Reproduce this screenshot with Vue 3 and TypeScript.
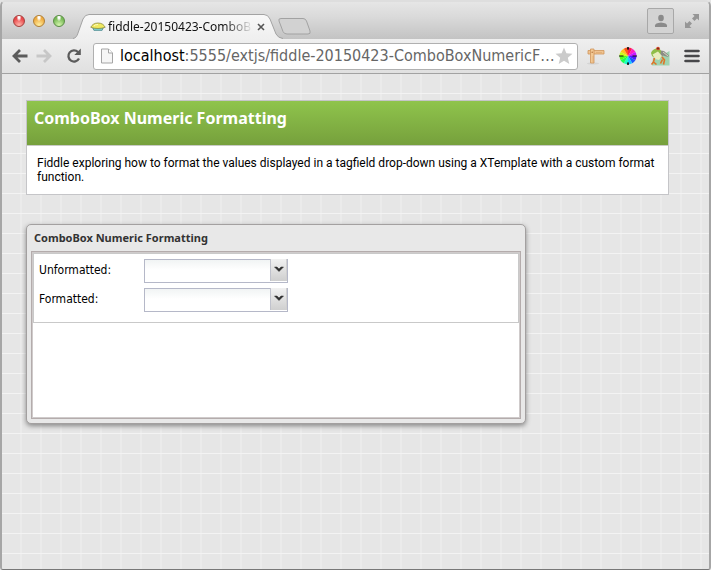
<script setup lang="ts">
import { reactive } from 'vue'

interface Field {
  id: string
  label: string
}

const title = 'ComboBox Numeric Formatting'
const fields: Field[] = [
  { id: 'unformatted', label: 'Unformatted:' },
  { id: 'formatted', label: 'Formatted:' },
]
const values = reactive<Record<string, string>>({ unformatted: '', formatted: '' })

const hues = Array.from({ length: 12 }, (_, i) => {
  const point = (deg: number) => {
    const a = (deg * Math.PI) / 180
    return `${(10 + 8.5 * Math.sin(a)).toFixed(2)} ${(10 - 8.5 * Math.cos(a)).toFixed(2)}`
  }
  return {
    d: `M10 10L${point(i * 30)}A8.5 8.5 0 0 1 ${point(i * 30 + 30)}Z`,
    fill: `hsl(${345 - i * 30} 100% 55%)`,
  }
})
</script>

<template>
  <div class="browser">
    <header class="tabstrip">
      <div class="lights">
        <button class="light red" aria-label="Close window"></button>
        <button class="light amber" aria-label="Minimise window"></button>
        <button class="light green" aria-label="Zoom window"></button>
      </div>
      <div class="tab">
        <svg class="tab-shape" viewBox="0 0 210 25" aria-hidden="true">
          <defs>
            <linearGradient id="tabFill" x1="0" y1="0" x2="0" y2="1">
              <stop offset="0" stop-color="#f8f8f8" />
              <stop offset="1" stop-color="#efefef" />
            </linearGradient>
          </defs>
          <path
            d="M0 25C3 24 4 22 5 19L10 5Q12 .5 16 .5H191Q195 .5 197 5L203 20Q205 24 210 25Z"
            fill="url(#tabFill)"
          />
          <path
            d="M0 24.500C3 24 4 22 5 19L10 5Q12 .5 16 .5H191Q195 .5 197 5L203 20Q205 24 210 24.500"
            fill="none"
            stroke="#a3a3a3"
          />
        </svg>
        <svg class="favicon" viewBox="0 0 16 16" aria-hidden="true">
          <path d="M2.500 8.500h11L12 11.500H4Z" fill="#55b9bd" stroke="#477f88" stroke-width=".7" />
          <path d="M5 9.500v2m2-2v2m2-2v2m2-2v2" stroke="#c4eeec" stroke-width=".6" />
          <path d="M.8 8.300C2 6 4 4 8 4s6 2 7.200 4.300Q12 9.500 8 9.500T.8 8.300Z" fill="#efe960" stroke="#8d8b45" stroke-width=".8" />
          <path d="M4 7Q5 5.500 8 5.500" fill="none" stroke="#fffbc0" />
        </svg>
        <span class="tab-title">fiddle-20150423-ComboB</span>
        <button class="tab-close" aria-label="Close tab">
          <svg viewBox="0 0 8 8"><path d="M1 1l6 6M7 1L1 7" stroke="#555" stroke-width="1.600" /></svg>
        </button>
      </div>
      <button class="new-tab" aria-label="New tab">
        <svg viewBox="0 0 33 17">
          <path d="M3 .5H25Q27.500 .5 28.500 3L32 13Q33 16 30 16H9Q6 16 5 13.500L1 3Q0 .5 3 .5Z" fill="#d2d2d2" stroke="#a2a2a2" />
        </svg>
      </button>
      <div class="window-tools">
        <button class="person" aria-label="User profile">
          <svg viewBox="0 0 14 14">
            <ellipse cx="7" cy="4" rx="2.800" ry="3.300" fill="#8a8a8a" />
            <path d="M1 13v-1.500Q1 9 7 8.500q6 .5 6 3V13Z" fill="#8a8a8a" />
          </svg>
        </button>
        <button class="expand" aria-label="Full screen">
          <svg viewBox="0 0 16 16">
            <path d="M8.500 1H15v6.500l-2-2-2.500 2.500-2.500-2.500L10.500 3ZM7.500 15H1V8.500l2 2L5.500 8 8 10.500 5.500 13Z" fill="#969696" />
          </svg>
        </button>
      </div>
    </header>

    <nav class="toolbar">
      <button class="nav back" aria-label="Back">
        <svg viewBox="0 0 18 18"><path d="M16.500 9H3M9 3L3 9l6 6" fill="none" stroke="#5b5b5b" stroke-width="2.800" /></svg>
      </button>
      <button class="nav" aria-label="Forward">
        <svg viewBox="0 0 18 18"><path d="M1.500 9H15M9 3l6 6-6 6" fill="none" stroke="#c7c7c7" stroke-width="2.800" /></svg>
      </button>
      <button class="nav" aria-label="Reload">
        <svg viewBox="0 0 18 18">
          <path d="M14 11.500A5.600 5.600 0 1 1 13 5" fill="none" stroke="#5b5b5b" stroke-width="2.300" />
          <path d="M15.800 1.500V8H9.300Z" fill="#5b5b5b" />
        </svg>
      </button>
      <div class="address">
        <svg class="page-icon" viewBox="0 0 12 16" aria-hidden="true">
          <path d="M.5 1H7.500L11.500 5V15H.5Z" fill="#f6f6f6" stroke="#a5a5a5" />
          <path d="M7.500 1V5H11.500" fill="#fff" stroke="#a5a5a5" />
        </svg>
        <a class="url" href="#"><b>localhost</b>:5555/extjs/fiddle-20150423-ComboBoxNumericF…</a>
        <button class="star" aria-label="Bookmark">
          <svg viewBox="0 0 18 18">
            <path d="M9 .5l2.400 5.800 6.100.500-4.700 4 1.500 6.200L9 13.700 3.700 17l1.500-6.200-4.700-4 6.100-.5Z" fill="#cbcbcb" />
          </svg>
        </button>
      </div>
      <div class="extensions">
        <button aria-label="Page ruler">
          <svg viewBox="0 0 20 20">
            <ellipse cx="7" cy="17.500" rx="6" ry="1" fill="#d4d4d4" />
            <path d="M2 4.500H18V8H2Z" fill="#f0c391" stroke="#cf965b" stroke-width=".8" />
            <path d="M4.500 3H8V17H4.500Z" fill="#f3c995" stroke="#cf965b" stroke-width=".8" />
            <path d="M11 6v1m2-1v1m2-1v1M6.500 11h1m-1 2h1m-1 2h1" stroke="#c3864a" stroke-width=".6" />
            <circle cx="6.200" cy="6.200" r=".8" fill="#b97a43" />
          </svg>
        </button>
        <button aria-label="Colour picker">
          <svg viewBox="0 0 20 20">
            <path v-for="hue in hues" :key="hue.d" :d="hue.d" :fill="hue.fill" />
            <path d="M10 2v2M10 16v2M1 10h4.500M14.500 10H19" stroke="#111" stroke-width="1" />
            <circle cx="10" cy="2" r="1.100" fill="#111" />
            <circle cx="10" cy="18" r="1.100" fill="#111" />
          </svg>
        </button>
        <button aria-label="Frog">
          <svg viewBox="0 0 20 20">
            <path d="M3 12L14 8L19.500 5V19.500H2Z" fill="#9fd3b0" />
            <path d="M8 4L14 5l5 4.500-1 1.500-5-1.500-3 3Z" fill="#8b8c86" />
            <path d="M13 6l5 4" stroke="#d9d8c5" />
            <path d="M1 7Q2 3.500 6 2.500l3-1L11 5l-1 5-4 3L2 10Z" fill="#8fbe48" />
            <path d="M2.500 8.500l5.500-3 4 4.500-3 4-4-1Z" fill="#e8edbd" />
            <circle cx="8" cy="2.500" r="1.800" fill="#d8452c" />
            <circle cx="8" cy="2.500" r=".7" fill="#321" />
            <path d="M4.500 12l-1 4-2 2.500m2-2.500l3 2.500M12 11l2.500 3-1 4.500m-1-5l-2 4" fill="none" stroke="#de7427" stroke-width="1.600" />
          </svg>
        </button>
        <button aria-label="Menu">
          <svg viewBox="0 0 20 20"><path d="M3.500 5h13M3.500 10h13M3.500 15h13" stroke="#47474a" stroke-width="2.600" stroke-linecap="round" /></svg>
        </button>
      </div>
    </nav>

    <main class="page">
      <section class="intro">
        <h1>{{ title }}</h1>
        <p>
          Fiddle exploring how to format the values displayed in a tagfield drop-down using a
          XTemplate with a custom format function.
        </p>
      </section>

      <section class="window">
        <h2>{{ title }}</h2>
        <div class="window-body">
          <form class="form" @submit.prevent>
            <div v-for="field in fields" :key="field.id" class="row">
              <label :for="field.id">{{ field.label }}</label>
              <div class="combo">
                <select :id="field.id" v-model="values[field.id]">
                  <option value=""></option>
                </select>
                <span class="trigger" aria-hidden="true">
                  <svg viewBox="0 0 10 6"><path d="M.5 1H3L5 3 7 1H9.500L5 5.500Z" fill="#2e2e2e" stroke="#2e2e2e" stroke-width=".5" /></svg>
                </span>
              </div>
            </div>
          </form>
        </div>
      </section>
    </main>
  </div>
</template>

<style>
html,
body {
  margin: 0;
  background: #e4e4e4;
}
</style>

<style scoped>
* {
  box-sizing: border-box;
}
button {
  display: flex;
  align-items: center;
  justify-content: center;
  flex: none;
  margin: 0;
  padding: 0;
  border: 0;
  background: none;
}
svg {
  display: block;
  flex: none;
}
.browser {
  display: flex;
  flex-direction: column;
  min-height: 100vh;
  border: solid #a6a6a6;
  border-width: 2px 2px 1px;
  border-top-color: #dedede;
  border-bottom-color: #777;
  border-radius: 6px 6px 3px 3px;
  overflow: hidden;
  font-family: "Noto Sans", "DejaVu Sans Condensed", sans-serif;
}
.tabstrip {
  display: flex;
  align-items: flex-end;
  height: 37px;
  padding: 0 9px 0 11px;
  background: linear-gradient(#e6e6e6, #dadada 40%, #c3c3c3);
}
.lights {
  display: flex;
  gap: 8px;
  padding-bottom: 12px;
}
.light {
  width: 12px;
  height: 12px;
  border: 1px solid;
  border-radius: 50%;
}
.red {
  border-color: #a4413e;
  background: radial-gradient(ellipse at 50% 10%, #fff 0 12%, transparent 35%), radial-gradient(circle at 50% 90%, #ffb6ac, #e9494b 65%);
}
.amber {
  border-color: #b07f35;
  background: radial-gradient(ellipse at 50% 10%, #fff 0 12%, transparent 35%), radial-gradient(circle at 50% 90%, #ffefa0, #efac42 65%);
}
.green {
  border-color: #5a8c45;
  background: radial-gradient(ellipse at 50% 10%, #fff 0 12%, transparent 35%), radial-gradient(circle at 50% 90%, #d5f5ad, #79bb58 65%);
}
.tab {
  position: relative;
  display: flex;
  align-items: center;
  width: 210px;
  height: 25px;
  margin-left: 8px;
  padding: 0 14px 0 17px;
}
.tab-shape {
  position: absolute;
  inset: 0;
  width: 100%;
  height: 100%;
}
.favicon,
.tab-title,
.tab-close {
  position: relative;
}
.favicon {
  width: 16px;
  height: 16px;
  margin-right: 2px;
}
.tab-title {
  flex: 1;
  white-space: nowrap;
  font-size: 12px;
  line-height: 16px;
  color: #111;
  mask-image: linear-gradient(to right, #000 80%, transparent);
}
.tab-close {
  width: 16px;
  height: 16px;
}
.tab-close svg {
  width: 8px;
  height: 8px;
}
.new-tab {
  margin: 0 0 4px -5px;
}
.new-tab svg {
  width: 33px;
  height: 17px;
}
.window-tools {
  display: flex;
  align-items: center;
  gap: 10px;
  margin-left: auto;
  padding-bottom: 5px;
}
.person {
  width: 27px;
  height: 26px;
  border: 1px solid #a8a8a8;
  border-radius: 2px;
  background: #d3d3d3;
}
.person svg {
  width: 14px;
  height: 14px;
}
.expand svg {
  width: 16px;
  height: 16px;
}
.toolbar {
  display: flex;
  align-items: center;
  height: 35px;
  padding: 0 7px 0 8px;
  border-bottom: 1px solid #a2a2a2;
  background: linear-gradient(#efefef, #e0e0e0);
}
.nav {
  width: 30px;
  height: 28px;
}
.nav.back {
  width: 19px;
}
.nav svg {
  width: 18px;
  height: 18px;
}
.address {
  display: flex;
  align-items: center;
  flex: 1;
  min-width: 0;
  height: 27px;
  margin: 0 8px 0 4px;
  padding: 0 4px 0 7px;
  border: 1px solid #b0b0b0;
  border-radius: 3px;
  background: #fff;
}
.page-icon {
  width: 12px;
  height: 16px;
}
.url {
  flex: 1;
  min-width: 0;
  margin-left: 7px;
  overflow: hidden;
  white-space: nowrap;
  font-family: "DejaVu Sans Condensed", "Noto Sans", sans-serif;
  font-size: 16px;
  line-height: 24px;
  color: #666;
  text-decoration: none;
}
.url b {
  font-weight: 400;
  color: #000;
}
.star svg {
  width: 18px;
  height: 18px;
}
.extensions {
  display: flex;
  gap: 12px;
}
.extensions svg {
  width: 20px;
  height: 20px;
}
.page {
  flex: 1;
  padding: 26px 40px 26px 24px;
  background-color: #e6e6e6;
  background-image:
    linear-gradient(#f3f3f3 1px, transparent 1px),
    linear-gradient(to right, #ebebeb 2px, transparent 2px);
  background-size: 20px 20px;
  background-position: 18px 19px;
}
.intro {
  border: 1px solid #c5c5c8;
  background: #fff;
}
.intro h1 {
  margin: 0;
  padding: 7px 7px 17px;
  border-bottom: 1px solid #c9cbc5;
  background: linear-gradient(#8fc44c, #76a03c);
  font-size: 16px;
  line-height: 20px;
  color: #fff;
}
.intro p {
  margin: 0;
  padding: 10px;
  font-family: Roboto, sans-serif;
  font-size: 12px;
  line-height: 14px;
  color: #000;
}
.window {
  width: 500px;
  max-width: 100%;
  margin-top: 29px;
  padding: 0 4px 4px;
  border: 1px solid #a3a0a0;
  border-radius: 5px;
  background: #e8e8e8;
  box-shadow: 0 2px 5px #888;
}
.window h2 {
  margin: 0;
  padding: 5px 3px;
  font-size: 11px;
  line-height: 16px;
  color: #333;
}
.window-body {
  min-height: 168px;
  border: 1px solid #b4acac;
  outline: 1px solid #cfcbcb;
  outline-offset: -2px;
  background: #fff;
}
.form {
  display: flex;
  flex-direction: column;
  gap: 5px;
  margin: 1px;
  padding: 4px 5px 11px;
  border: 1px solid #c9c9c9;
}
.row {
  display: flex;
  align-items: center;
}
.row label {
  width: 105px;
  font-family: "DejaVu Sans Condensed", "Noto Sans", sans-serif;
  font-size: 12px;
  line-height: 16px;
  color: #000;
}
.combo {
  position: relative;
  width: 144px;
  height: 24px;
}
.combo select {
  appearance: none;
  width: 100%;
  height: 100%;
  padding: 0 20px 0 4px;
  border: 1px solid #b5b8c8;
  border-radius: 0;
  background: linear-gradient(#f1f4f4, #fff 10px);
  font: 12px/16px "Noto Sans", sans-serif;
}
.trigger {
  position: absolute;
  top: 1px;
  right: 1px;
  bottom: 1px;
  display: flex;
  justify-content: center;
  width: 17px;
  padding-top: 7px;
  border-left: 1px solid #c0c2cc;
  border-right: 1px solid #d0d0d0;
  background: linear-gradient(#f1f1f1, #cfcfcf);
  pointer-events: none;
}
.trigger svg {
  width: 10px;
  height: 6px;
}
</style>
